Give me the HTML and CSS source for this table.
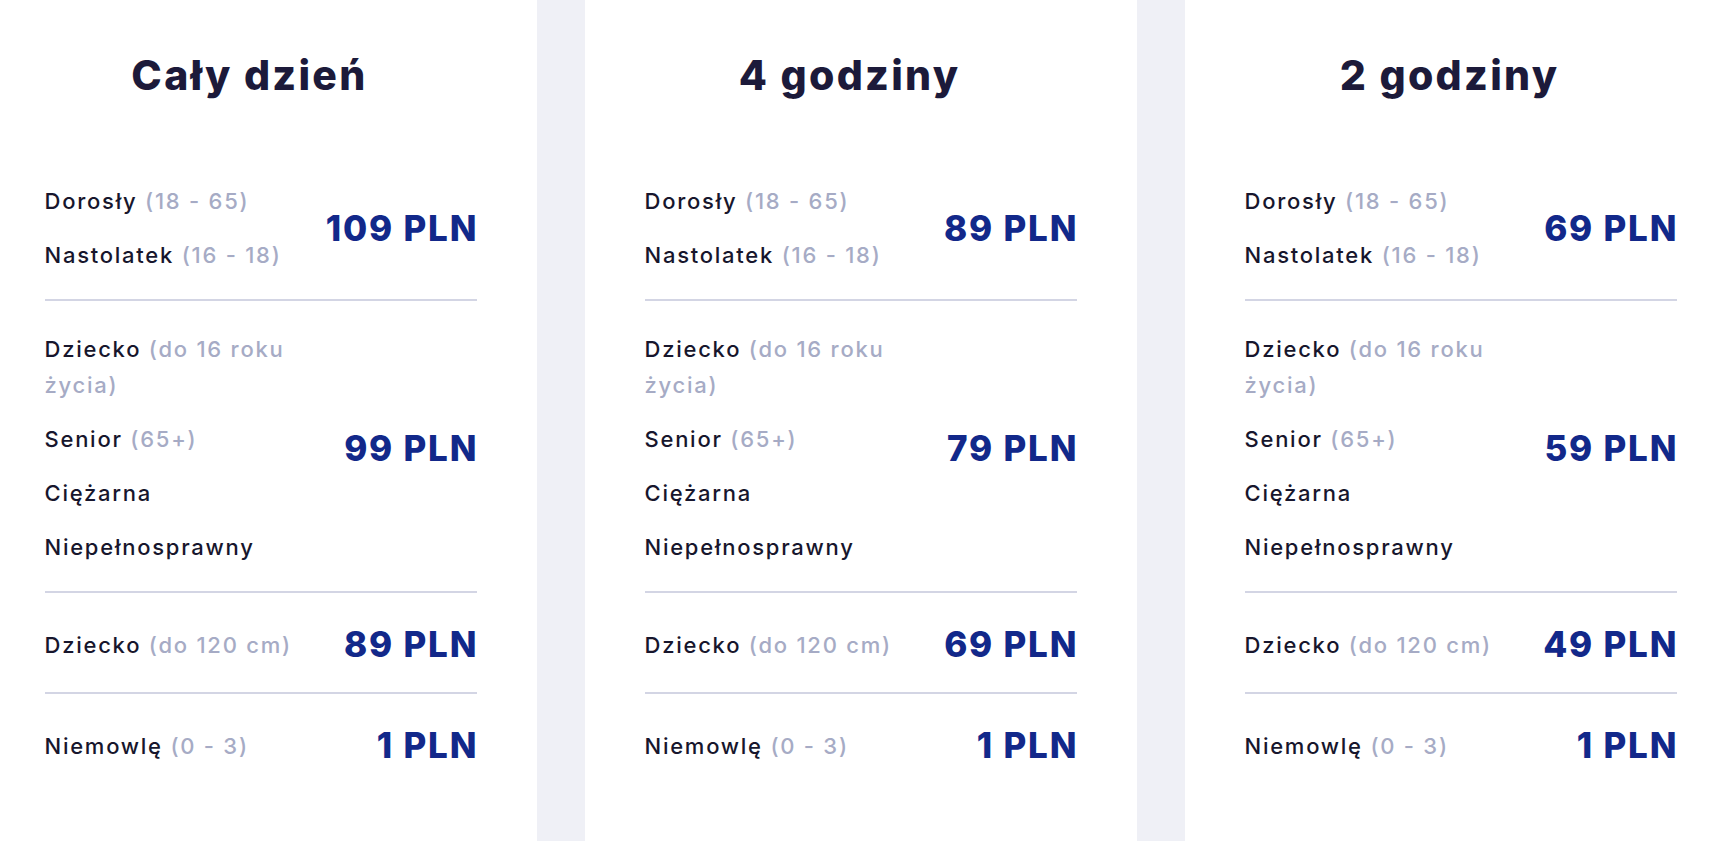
FILE: index.html
```html
<!DOCTYPE html>
<html lang="pl">
<head>
<meta charset="utf-8">
<title>Cennik</title>
<link rel="stylesheet" href="styles.css">
</head>
<body>
<main class="cards">
  <section class="card">
    <h2 class="card-title">Cały dzień</h2>
    <div class="group">
      <ul class="labels">
        <li>Dorosły <span class="muted">(18 - 65)</span></li>
        <li>Nastolatek <span class="muted">(16 - 18)</span></li>
      </ul>
      <div class="price">109 PLN</div>
    </div>
    <div class="group">
      <ul class="labels">
        <li>Dziecko <span class="muted">(do 16 roku</span> <span class="muted">życia)</span></li>
        <li>Senior <span class="muted">(65+)</span></li>
        <li>Ciężarna</li>
        <li>Niepełnosprawny</li>
      </ul>
      <div class="price">99 PLN</div>
    </div>
    <div class="group">
      <ul class="labels">
        <li>Dziecko <span class="muted">(do 120 cm)</span></li>
      </ul>
      <div class="price">89 PLN</div>
    </div>
    <div class="group">
      <ul class="labels">
        <li>Niemowlę <span class="muted">(0 - 3)</span></li>
      </ul>
      <div class="price">1 PLN</div>
    </div>
  </section>

  <section class="card">
    <h2 class="card-title">4 godziny</h2>
    <div class="group">
      <ul class="labels">
        <li>Dorosły <span class="muted">(18 - 65)</span></li>
        <li>Nastolatek <span class="muted">(16 - 18)</span></li>
      </ul>
      <div class="price">89 PLN</div>
    </div>
    <div class="group">
      <ul class="labels">
        <li>Dziecko <span class="muted">(do 16 roku</span> <span class="muted">życia)</span></li>
        <li>Senior <span class="muted">(65+)</span></li>
        <li>Ciężarna</li>
        <li>Niepełnosprawny</li>
      </ul>
      <div class="price">79 PLN</div>
    </div>
    <div class="group">
      <ul class="labels">
        <li>Dziecko <span class="muted">(do 120 cm)</span></li>
      </ul>
      <div class="price">69 PLN</div>
    </div>
    <div class="group">
      <ul class="labels">
        <li>Niemowlę <span class="muted">(0 - 3)</span></li>
      </ul>
      <div class="price">1 PLN</div>
    </div>
  </section>

  <section class="card">
    <h2 class="card-title">2 godziny</h2>
    <div class="group">
      <ul class="labels">
        <li>Dorosły <span class="muted">(18 - 65)</span></li>
        <li>Nastolatek <span class="muted">(16 - 18)</span></li>
      </ul>
      <div class="price">69 PLN</div>
    </div>
    <div class="group">
      <ul class="labels">
        <li>Dziecko <span class="muted">(do 16 roku</span> <span class="muted">życia)</span></li>
        <li>Senior <span class="muted">(65+)</span></li>
        <li>Ciężarna</li>
        <li>Niepełnosprawny</li>
      </ul>
      <div class="price">59 PLN</div>
    </div>
    <div class="group">
      <ul class="labels">
        <li>Dziecko <span class="muted">(do 120 cm)</span></li>
      </ul>
      <div class="price">49 PLN</div>
    </div>
    <div class="group">
      <ul class="labels">
        <li>Niemowlę <span class="muted">(0 - 3)</span></li>
      </ul>
      <div class="price">1 PLN</div>
    </div>
  </section>
</main>
</body>
</html>
```
FILE: styles.css
```css
* { box-sizing: border-box; }

html, body {
  margin: 0;
  padding: 0;
  height: 100%;
}

body {
  background: #eff0f6;
  font-family: "Inter", "Noto Sans", sans-serif;
  overflow: hidden;
}

.cards {
  display: flex;
  justify-content: center;
  gap: 48px;
  height: 100%;
}

.card {
  flex: 0 0 552px;
  width: 552px;
  background: #ffffff;
  padding: 50px 60px 0;
}

.card-title {
  margin: 0 0 53px;
  padding-right: 22px;
  text-align: center;
  font-size: 41px;
  line-height: 50px;
  font-weight: 800;
  letter-spacing: 2.3px;
  color: #1c1a3a;
}

.group {
  display: flex;
  align-items: center;
  justify-content: space-between;
  padding: 30px 0 26px;
  border-top: 2px solid #d3d5e4;
}

.card-title + .group {
  border-top: 0;
}

.labels {
  list-style: none;
  margin: 0;
  padding: 0;
  width: 272px;
  display: flex;
  flex-direction: column;
  gap: 18px;
}

.labels li {
  font-size: 22px;
  line-height: 36px;
  font-weight: 500;
  letter-spacing: 1.75px;
  color: #17162d;
}

.muted {
  color: #a6abc5;
}

.price {
  font-size: 35px;
  line-height: 43px;
  font-weight: 800;
  letter-spacing: 1.8px;
  margin-right: -1.8px;
  color: #12288a;
  white-space: nowrap;
}
```
